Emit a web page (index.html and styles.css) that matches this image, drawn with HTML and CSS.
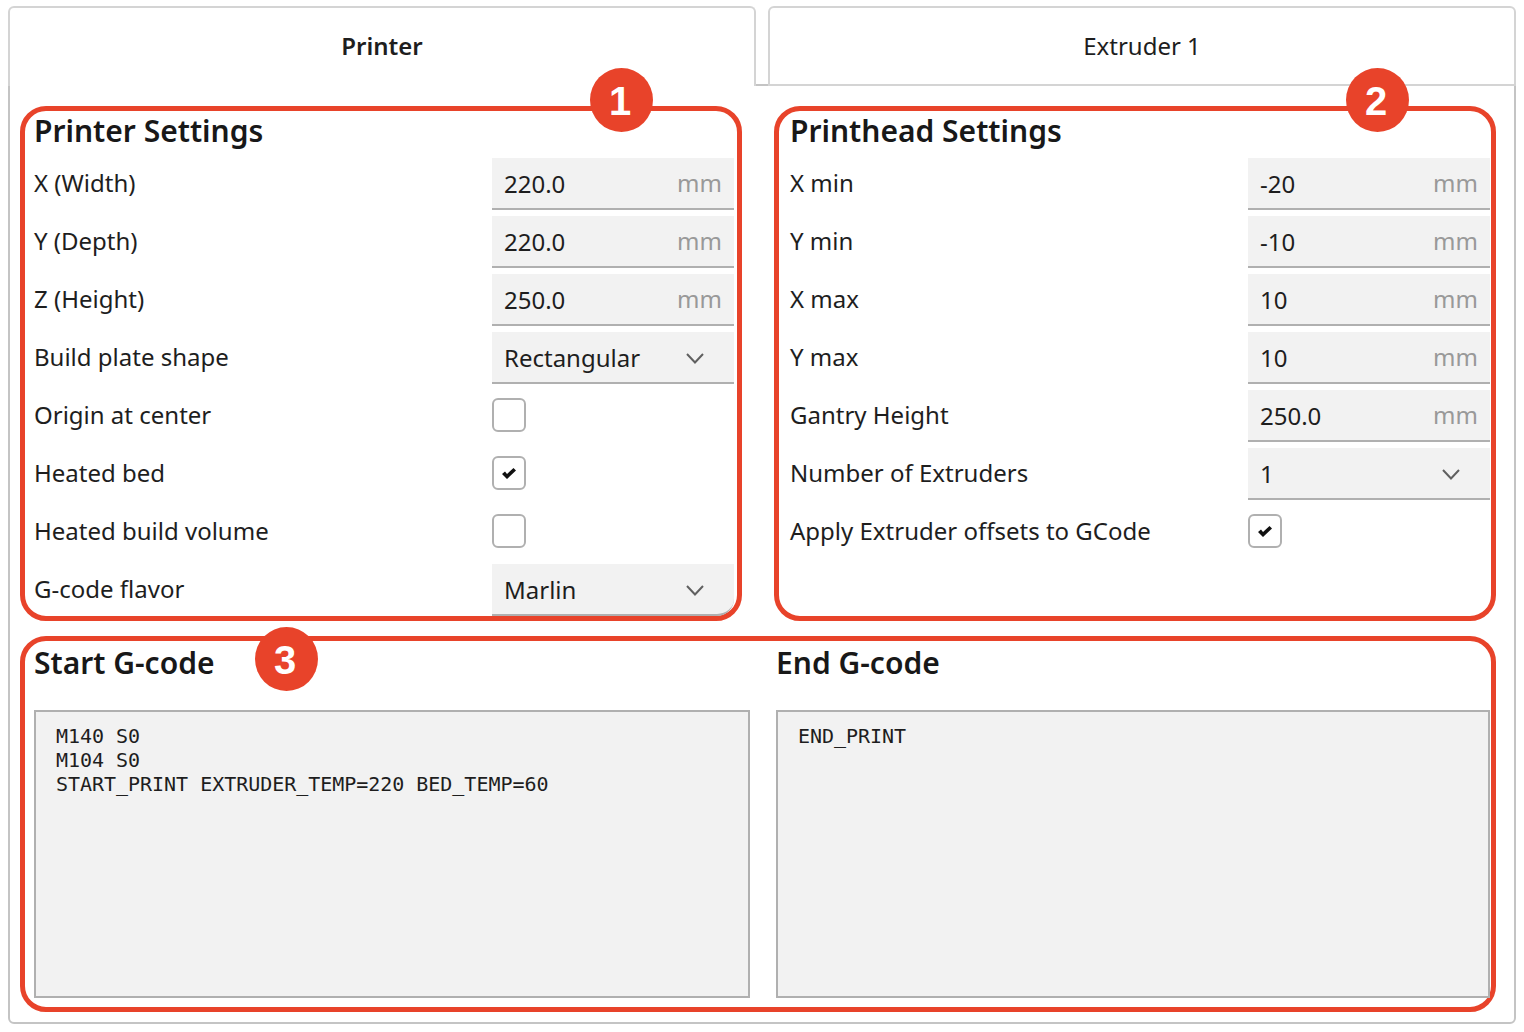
FILE: index.html
```html
<!DOCTYPE html>
<html lang="en">
<head>
    <meta charset="UTF-8">
    <meta name="viewport" content="width=device-width, initial-scale=1.0">
    <title>Machine Settings</title>
    <link rel="stylesheet" href="styles.css">
</head>
<body>
    <div class="machine">
        <div class="tabs">
            <div class="tab active">Printer</div>
            <div class="tab">Extruder 1</div>
        </div>
        <div class="panel">
            <div class="top-sections">
                <section class="section">
                    <h2>Printer Settings</h2>
                    <div class="row"><span>X (Width)</span><div class="field"><span>220.0</span><span class="unit">mm</span></div></div>
                    <div class="row"><span>Y (Depth)</span><div class="field"><span>220.0</span><span class="unit">mm</span></div></div>
                    <div class="row"><span>Z (Height)</span><div class="field"><span>250.0</span><span class="unit">mm</span></div></div>
                    <div class="row"><span>Build plate shape</span><div class="field select"><span>Rectangular</span><svg class="chevron" viewBox="0 0 18 12"><path d="M1 2 9 10.5 17 2"/></svg></div></div>
                    <div class="row"><span>Origin at center</span><div class="checkbox"></div></div>
                    <div class="row"><span>Heated bed</span><div class="checkbox"><svg class="check" viewBox="0 0 14 11"><path d="M0 6 3 3.5 5 6 11.5 0 14 2.5 5 11Z"/></svg></div></div>
                    <div class="row"><span>Heated build volume</span><div class="checkbox"></div></div>
                    <div class="row"><span>G-code flavor</span><div class="field select corner"><span>Marlin</span><svg class="chevron" viewBox="0 0 18 12"><path d="M1 2 9 10.5 17 2"/></svg></div></div>
                    <div class="badge badge-one">1</div>
                </section>
                <section class="section section-right">
                    <h2>Printhead Settings</h2>
                    <div class="row"><span>X min</span><div class="field"><span>-20</span><span class="unit">mm</span></div></div>
                    <div class="row"><span>Y min</span><div class="field"><span>-10</span><span class="unit">mm</span></div></div>
                    <div class="row"><span>X max</span><div class="field"><span>10</span><span class="unit">mm</span></div></div>
                    <div class="row"><span>Y max</span><div class="field"><span>10</span><span class="unit">mm</span></div></div>
                    <div class="row"><span>Gantry Height</span><div class="field"><span>250.0</span><span class="unit">mm</span></div></div>
                    <div class="row"><span>Number of Extruders</span><div class="field select"><span>1</span><svg class="chevron" viewBox="0 0 18 12"><path d="M1 2 9 10.5 17 2"/></svg></div></div>
                    <div class="row"><span>Apply Extruder offsets to GCode</span><div class="checkbox"><svg class="check" viewBox="0 0 14 11"><path d="M0 6 3 3.5 5 6 11.5 0 14 2.5 5 11Z"/></svg></div></div>
                    <div class="badge badge-two">2</div>
                </section>
            </div>
            <section class="section gcode-section">
                <div class="gcode">
                    <h2>Start G-code</h2>
                    <pre class="code">M140 S0
M104 S0
START_PRINT EXTRUDER_TEMP=220 BED_TEMP=60</pre>
                </div>
                <div class="gcode">
                    <h2>End G-code</h2>
                    <pre class="code">END_PRINT</pre>
                </div>
                <div class="badge badge-three">3</div>
            </section>
        </div>
    </div>
</body>
</html>
```

FILE: styles.css
```css
body {
    margin: 0;
    background-color: #fff;
    color: #1e1e1e;
    font-family: "Noto Sans", sans-serif;
    font-size: 24px;
}

.machine {
    width: 1508px;
    margin-left: 8px;
    padding-top: 6px;
}

.tabs {
    display: flex;
    gap: 12px;
    height: 80px;
}

.tab {
    flex: 1;
    display: flex;
    align-items: center;
    justify-content: center;
    padding-bottom: 2px;
    box-sizing: border-box;
    background-color: #fff;
    border: 2px solid #d4d4d4;
    border-radius: 6px 6px 0 0;
}

.tab.active {
    font-weight: 600;
    padding-bottom: 4px;
    border-bottom: none;
    position: relative;
    z-index: 1;
}

.panel {
    margin-top: -2px;
    height: 940px;
    box-sizing: border-box;
    padding: 20px 18px 0 10px;
    border: 2px solid #c4c4c4;
    border-radius: 0 0 6px 6px;
}

.top-sections {
    display: grid;
    grid-template-columns: 722px 722px;
    gap: 32px;
}

.section {
    position: relative;
    z-index: 2;
    box-sizing: border-box;
    height: 515px;
    padding: 0 3px 0 9px;
    border: 5px solid #e8432a;
    border-radius: 26px;
}

.section-right {
    padding: 0 3px 0 11px;
}

h2 {
    margin: 0;
    height: 47px;
    line-height: 40px;
    font-size: 30px;
    font-weight: 600;
    color: #181818;
}

.row {
    display: grid;
    grid-template-columns: 458px 242px;
    align-items: center;
    height: 52px;
    margin-bottom: 6px;
}

.row > span {
    margin-bottom: 4px;
}

.field {
    display: flex;
    align-items: center;
    justify-content: space-between;
    box-sizing: border-box;
    height: 52px;
    padding: 0 12px;
    background-color: #f2f2f2;
    border-bottom: 2px solid #b0b0b0;
}

.unit {
    margin-bottom: 2px;
    color: #999;
}

.select {
    padding-right: 30px;
}

.corner {
    border-bottom-right-radius: 17px;
}

.chevron {
    width: 18px;
    height: 12px;
    margin-top: 2px;
    fill: none;
    stroke: #606060;
    stroke-width: 2;
}

.checkbox {
    display: flex;
    align-items: center;
    justify-content: center;
    box-sizing: border-box;
    width: 34px;
    height: 34px;
    margin-bottom: 2px;
    background-color: #fff;
    border: 2px solid #b0b0b0;
    border-radius: 6px;
}

.check {
    width: 14px;
    height: 11px;
    fill: #111;
}

.gcode-section {
    display: grid;
    grid-template-columns: 716px 714px;
    gap: 26px;
    height: 376px;
    margin-top: 15px;
}

.gcode h2 {
    height: 69px;
    line-height: 44px;
}

.code {
    height: 288px;
    box-sizing: border-box;
    margin: 0;
    padding: 12px 20px;
    background-color: #f2f2f2;
    border: 2px solid #b0b0b0;
    font-family: "DejaVu Sans Mono", monospace;
    font-size: 20px;
    letter-spacing: -0.03px;
    line-height: 24px;
}

.badge {
    position: absolute;
    width: 63px;
    height: 64px;
    box-sizing: border-box;
    padding: 2px 3px 0 0;
    display: flex;
    align-items: center;
    justify-content: center;
    background-color: #e8432a;
    border-radius: 50%;
    color: #fff;
    font-family: "Liberation Sans", sans-serif;
    font-size: 40px;
    font-weight: bold;
}

.badge-one {
    top: -43px;
    left: 565px;
}

.badge-two {
    top: -43px;
    left: 567px;
}

.badge-three {
    top: -14px;
    left: 230px;
}
```
